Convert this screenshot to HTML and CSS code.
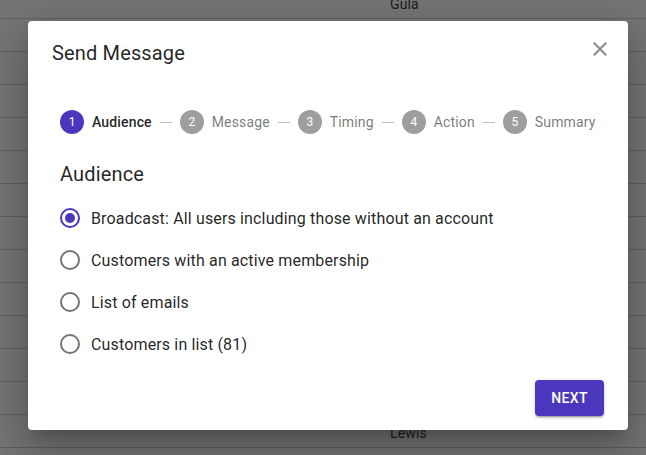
FILE: index.html
```html
<!DOCTYPE html>
<html>
<head>
  <title>Send Message</title>
  <link rel="stylesheet" href="styles.css">
</head>
<body>
  <div class="page-table">
    <div class="table-row"><span class="cell">Gula</span></div>
    <div class="table-row"></div>
    <div class="table-row"></div>
    <div class="table-row"></div>
    <div class="table-row"></div>
    <div class="table-row"></div>
    <div class="table-row"></div>
    <div class="table-row"></div>
    <div class="table-row"></div>
    <div class="table-row"></div>
    <div class="table-row"></div>
    <div class="table-row"></div>
    <div class="table-row"></div>
    <div class="table-row"><span class="cell">Lewis</span></div>
  </div>

  <div class="dialog">
    <div class="dialog-header">
      <h2 class="dialog-title">Send Message</h2>
      <button class="close-button" aria-label="close">
        <svg width="24" height="24" viewBox="0 0 24 24">
          <path d="M19 6.41 17.59 5 12 10.59 6.41 5 5 6.41 10.59 12 5 17.59 6.41 19 12 13.41 17.59 19 19 17.59 13.41 12z" fill="#8a8a8a"/>
        </svg>
      </button>
    </div>

    <div class="dialog-body">
      <div class="stepper">
        <div class="step active"><span class="step-icon">1</span><span class="step-label">Audience</span></div>
        <div class="connector"></div>
        <div class="step"><span class="step-icon">2</span><span class="step-label">Message</span></div>
        <div class="connector"></div>
        <div class="step"><span class="step-icon">3</span><span class="step-label">Timing</span></div>
        <div class="connector"></div>
        <div class="step"><span class="step-icon">4</span><span class="step-label">Action</span></div>
        <div class="connector"></div>
        <div class="step"><span class="step-icon">5</span><span class="step-label">Summary</span></div>
      </div>

      <h3 class="section-heading">Audience</h3>

      <div class="radio-group">
        <label class="radio-row"><span class="radio checked"></span>Broadcast: All users including those without an account</label>
        <label class="radio-row"><span class="radio"></span>Customers with an active membership</label>
        <label class="radio-row"><span class="radio"></span>List of emails</label>
        <label class="radio-row"><span class="radio"></span>Customers in list (81)</label>
      </div>
    </div>

    <div class="dialog-actions">
      <button class="next-button">Next</button>
    </div>
  </div>
</body>
</html>
```

FILE: styles.css
```css
body {
  margin: 0;
  font-family: Roboto, "Liberation Sans", sans-serif;
  background-color: #757575;
  overflow: hidden;
}

.page-table {
  margin-top: -14px;
}

.table-row {
  height: 32px;
  border-bottom: 1px solid #606060;
  position: relative;
}

.cell {
  position: absolute;
  left: 390px;
  top: 10px;
  font-size: 14px;
  color: #1c1c1c;
  letter-spacing: 0.15px;
}

.dialog {
  position: absolute;
  left: 28px;
  top: 21px;
  width: 600px;
  height: 409px;
  background-color: #fff;
  border-radius: 4px;
  box-shadow: 0 11px 15px -7px rgba(0, 0, 0, 0.2), 0 24px 38px 3px rgba(0, 0, 0, 0.14), 0 9px 46px 8px rgba(0, 0, 0, 0.12);
  display: flex;
  flex-direction: column;
}

.dialog-header {
  padding: 16px 24px;
  position: relative;
}

.dialog-title {
  margin: 0;
  font-size: 20px;
  font-weight: 400;
  line-height: 32px;
  letter-spacing: 0.15px;
  color: rgba(0, 0, 0, 0.87);
}

.close-button {
  position: absolute;
  top: 16px;
  right: 16px;
  width: 24px;
  height: 24px;
  padding: 0;
  border: none;
  background: none;
}

.dialog-body {
  padding: 25px 32px 0;
  flex-grow: 1;
}

.stepper {
  display: flex;
  align-items: center;
  height: 24px;
}

.step {
  display: flex;
  align-items: center;
}

.step-icon {
  width: 24px;
  height: 24px;
  border-radius: 50%;
  background-color: #9e9e9e;
  color: #fff;
  font-size: 12px;
  display: flex;
  align-items: center;
  justify-content: center;
}

.step-label {
  margin-left: 8px;
  font-size: 14px;
  letter-spacing: 0.15px;
  color: rgba(0, 0, 0, 0.54);
}

.step.active .step-icon {
  background-color: #4a37bd;
}

.step.active .step-label {
  color: rgba(0, 0, 0, 0.87);
  font-weight: 500;
}

.connector {
  width: 12px;
  height: 1px;
  background-color: #bdbdbd;
  margin: 0 8px;
}

.section-heading {
  margin: 24px 0 7px;
  font-size: 20px;
  font-weight: 400;
  line-height: 32px;
  letter-spacing: 0.15px;
  color: rgba(0, 0, 0, 0.87);
}

.radio-group {
  display: flex;
  flex-direction: column;
}

.radio-row {
  height: 42px;
  display: flex;
  align-items: center;
  font-size: 16px;
  letter-spacing: 0.15px;
  color: rgba(0, 0, 0, 0.87);
}

.radio {
  width: 16px;
  height: 16px;
  border: 2px solid #757575;
  border-radius: 50%;
  margin-right: 11px;
  position: relative;
}

.radio.checked {
  border-color: #4a37bd;
}

.radio.checked::after {
  content: "";
  position: absolute;
  left: 3px;
  top: 3px;
  width: 10px;
  height: 10px;
  border-radius: 50%;
  background-color: #4a37bd;
}

.dialog-actions {
  display: flex;
  justify-content: flex-end;
  padding: 0 24px 14px;
}

.next-button {
  height: 36px;
  padding: 0 16px;
  border: none;
  border-radius: 4px;
  background-color: #4a37bd;
  color: #fff;
  font-family: Roboto, "Liberation Sans", sans-serif;
  font-size: 14px;
  font-weight: 500;
  letter-spacing: 0.4px;
  text-transform: uppercase;
  box-shadow: 0 3px 1px -2px rgba(0, 0, 0, 0.2), 0 2px 2px 0 rgba(0, 0, 0, 0.14), 0 1px 5px 0 rgba(0, 0, 0, 0.12);
}
```
